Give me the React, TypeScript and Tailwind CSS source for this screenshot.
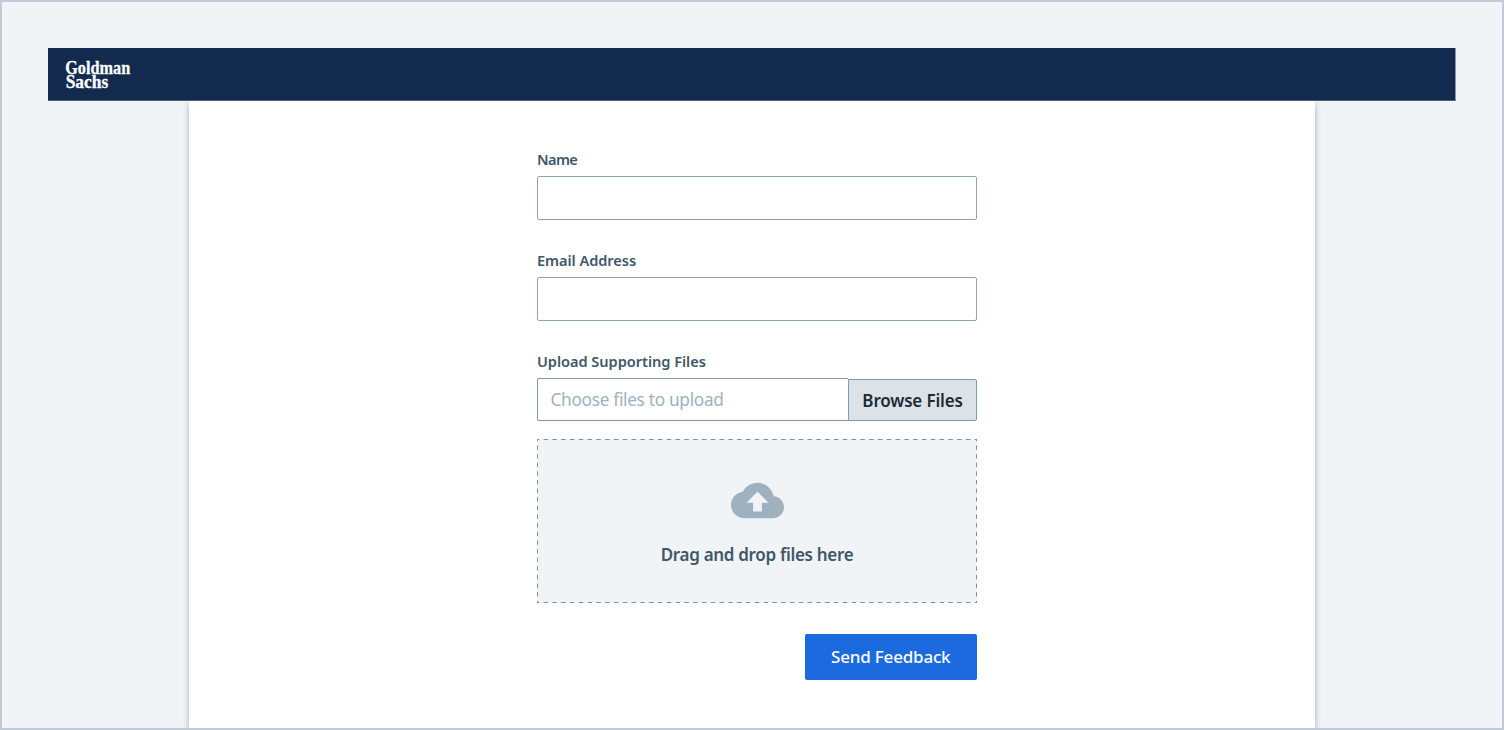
import React from "react";

const labelClass = "block h-[26px] text-[14.6px] leading-[19px] font-semibold whitespace-nowrap";

function Field({ label }: { label: string }) {
  return (
    <label className="block h-[101px]">
      <span className={labelClass}>
        <span className={label === "Name" ? "tracking-[-0.6px]" : "tracking-[-0.05px]"}>{label}</span>
      </span>
      <input className="block h-[44px] w-full rounded-[2px] border border-[#8ea4b3] bg-white px-3 outline-none" />
    </label>
  );
}

function Logo() {
  return (
    <svg width="68" height="36" viewBox="0 0 68 36" role="img" aria-label="Goldman Sachs" className="overflow-visible fill-white stroke-white stroke-[0.3] font-['Liberation_Serif',serif] text-[19px] font-bold">
      <text x="0.2" y="16.7" textLength="65" lengthAdjust="spacingAndGlyphs">Goldman</text>
      <text x="0.7" y="31" textLength="42.5" lengthAdjust="spacingAndGlyphs">Sachs</text>
    </svg>
  );
}

function DashedOutline() {
  return (
    <svg className="absolute inset-0" width="440" height="164" fill="none" stroke="#7892a3">
      <path d="M0 .5H440M0 163.5H440" strokeDasharray="4.4 4.4" strokeDashoffset="2.2" />
      <path d="M.5 0V164M439.5 0V164" strokeDasharray="4.316 4.316" strokeDashoffset="2.158" />
    </svg>
  );
}

export default function App() {
  return (
    <div className="flex h-[730px] w-[1504px] flex-col overflow-hidden border-2 border-[#c0cbd7] bg-[#f0f4f7] pt-[46px] font-['Noto_Sans',sans-serif] text-[#3f5768]">
      <header className="z-10 mx-[46px] h-[53px] w-[1408px] shrink-0 border-r border-b border-r-[#8997ac] border-b-[#4a5e7e] bg-[#112a4e] pt-[9px] pl-[17px]">
        <Logo />
      </header>
      <main className="ml-[187px] w-[1126px] grow bg-white pt-[49px] pl-[348px] shadow-[0_3px_6px_rgba(0,0,0,0.3)]">
        <form className="w-[440px]" onSubmit={(e) => e.preventDefault()}>
          <Field label="Name" />
          <Field label="Email Address" />
          <div className={labelClass}>
            <span className="tracking-[-0.04px]">Upload Supporting Files</span>
          </div>
          <div className="flex h-[43px] items-end">
            <div className="flex h-[43px] w-[311px] items-center rounded-l-[2px] border border-r-0 border-[#8299a9] pl-[12.5px] text-[17.3px] tracking-[-0.32px] text-[#a0b1be]">
              <span>Choose files to upload</span>
            </div>
            <button type="button" className="h-[42px] grow rounded-r-[2px] border border-[#8299a9] bg-[#dce3e8] pt-[2px] text-[17px] font-semibold tracking-[-0.17px] whitespace-nowrap text-[#1c2b36]">Browse Files</button>
          </div>
          <div className="relative mt-[18px] flex h-[164px] flex-col items-center bg-[#f0f4f7] pt-[35px]">
            <DashedOutline />
            <svg width="53" height="53" viewBox="0 0 24 24" fill="#9fb1be">
              <path d="M19.35 10.04C18.67 6.59 15.64 4 12 4 9.11 4 6.6 5.64 5.35 8.04 2.34 8.36 0 10.91 0 14c0 3.31 2.69 6 6 6h13c2.76 0 5-2.24 5-5 0-2.64-2.05-4.78-4.65-4.96zM14 13v4h-4v-4H7l5-5 5 5h-3z" />
            </svg>
            <span className="mt-[16px] text-[17px] leading-6 font-semibold tracking-[-0.31px]">Drag and drop files here</span>
          </div>
          <button type="submit" className="mt-[31px] ml-auto block h-[45.5px] w-[172.5px] rounded-[2px] bg-[#1b6ae0] text-[17px] font-medium tracking-[-0.2px] text-white">Send Feedback</button>
        </form>
      </main>
    </div>
  );
}
